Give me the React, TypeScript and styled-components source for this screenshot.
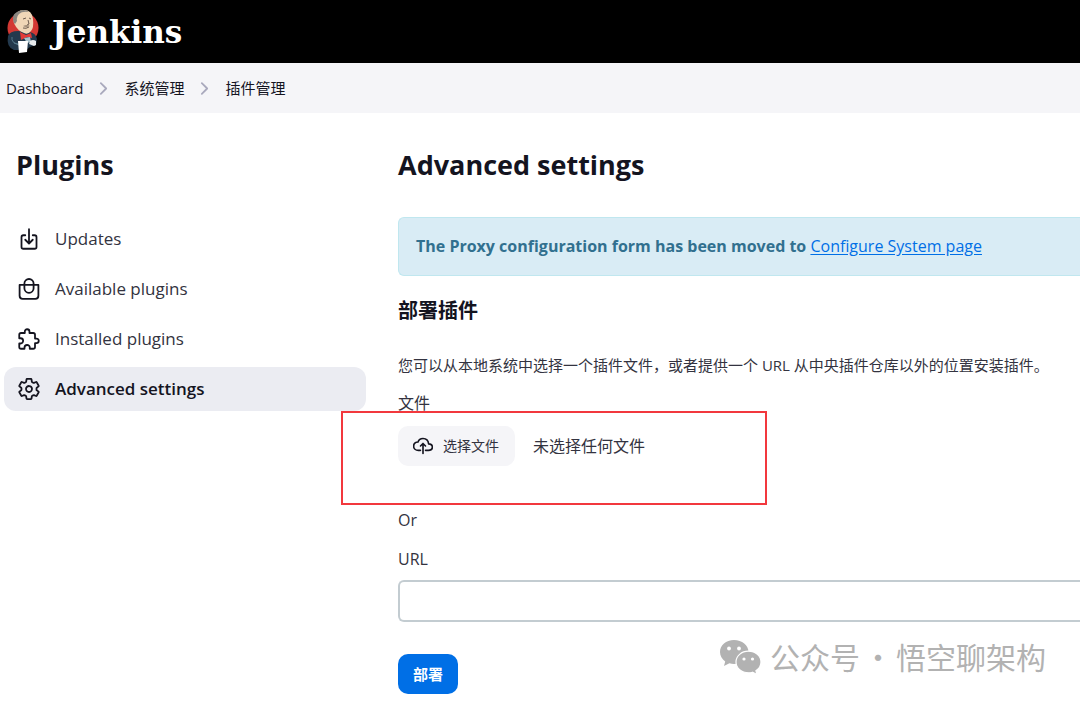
import React, { useRef, useState } from "react";
import styled, { createGlobalStyle, css } from "styled-components";
import {
  IoChevronForward,
  IoCloudUploadOutline,
  IoDownloadOutline,
  IoExtensionPuzzleOutline,
  IoSettingsOutline,
} from "react-icons/io5";

const colors = {
  text: "#14141f",
  muted: "#333340",
  bar: "#f5f5f8",
  active: "#ebecf2",
  primary: "#006fe6",
  infoBg: "#d9ecf5",
  infoBorder: "#c0e7ef",
  infoText: "#31708f",
  inputBorder: "#c3ccd1",
  mark: "#f2383d",
  watermark: "#b2b2b2",
};

const GlobalStyle = createGlobalStyle`
  *, *::before, *::after { box-sizing: border-box; }
  body {
    margin: 0;
    background: #fff;
    color: ${colors.text};
    font: 400 16px/24px "Open Sans", "Noto Sans CJK SC", sans-serif;
    overflow-x: hidden;
  }
`;

const Page = styled.div`
  position: relative;
`;

const Header = styled.header`
  display: flex;
  align-items: center;
  height: 63px;
  padding: 0 6px;
  background: #000;
`;

const Brand = styled.a`
  display: flex;
  align-items: center;
  gap: 13px;
  color: #fff;
  font: 700 31px/40px "DejaVu Serif", serif;
  text-decoration: none;
`;

const Breadcrumbs = styled.nav`
  display: flex;
  align-items: center;
  gap: 11px;
  height: 50px;
  padding: 0 6px;
  background: ${colors.bar};
  font-size: 15px;
`;

const Crumb = styled.a`
  color: ${colors.text};
  text-decoration: none;
`;

const Separator = styled(IoChevronForward)`
  width: 19px;
  height: 19px;
  color: #a9a9bd;
`;

const Body = styled.div`
  display: grid;
  grid-template-columns: 362px minmax(0, 1fr);
  gap: 32px;
  padding: 32px 0 8px 4px;
`;

const Title = styled.h1<{ $inset?: boolean }>`
  margin: 0;
  padding-left: ${(p) => (p.$inset ? 12 : 0)}px;
  font-size: 27px;
  font-weight: 700;
  line-height: 40px;
`;

const TaskList = styled.ul`
  display: flex;
  flex-direction: column;
  gap: 6px;
  margin: 32px 0 0;
  padding: 0;
  list-style: none;
`;

const Task = styled.a<{ $active?: boolean }>`
  display: flex;
  align-items: center;
  gap: 14px;
  height: 44px;
  padding: 0 13px;
  border-radius: 12px;
  color: ${colors.muted};
  font-size: 17px;
  text-decoration: none;

  svg {
    width: 24px;
    height: 24px;
    color: ${colors.text};
  }

  svg[viewBox="0 0 512 512"] path {
    stroke-width: 38px;
  }

  ${(p) =>
    p.$active &&
    css`
      background: ${colors.active};
      color: ${colors.text};
      font-weight: 600;
    `}
`;

const Alert = styled.div`
  margin-top: 32px;
  padding: 16px 17px 17px;
  border: 1px solid ${colors.infoBorder};
  border-right: 0;
  border-radius: 6px 0 0 6px;
  background: ${colors.infoBg};
  color: ${colors.infoText};
  font-weight: 700;
  white-space: nowrap;

  a {
    color: ${colors.primary};
    font-weight: 400;
    text-underline-offset: 2px;
  }
`;

const SectionTitle = styled.h2`
  margin: 21px 0 0;
  font-size: 20px;
  font-weight: 700;
  line-height: 28px;
`;

const Description = styled.p`
  margin: 28px 0 0;
  color: ${colors.muted};
  font-size: 15px;
`;

const FileField = styled.div`
  position: relative;
  margin-top: 14px;
`;

const Label = styled.label`
  display: block;
  color: ${colors.muted};
`;

const FileRow = styled.div`
  display: flex;
  align-items: center;
  gap: 18px;
  margin-top: 11px;
  color: ${colors.muted};

  input {
    display: none;
  }
`;

const FileButton = styled.button`
  display: flex;
  align-items: center;
  gap: 10px;
  height: 40px;
  padding: 0 16px 0 15px;
  border: 0;
  border-radius: 10px;
  background: ${colors.bar};
  color: ${colors.muted};
  font: inherit;
  font-size: 14px;

  svg {
    width: 20px;
    height: 20px;
    color: ${colors.text};
  }

  svg path {
    stroke-width: 42px;
  }
`;

const Highlight = styled.div`
  position: absolute;
  top: 20px;
  left: -57px;
  width: 426px;
  height: 94px;
  border: 2px solid ${colors.mark};
  pointer-events: none;
`;

const Or = styled.p`
  margin: 42px 0 15px;
  color: ${colors.muted};
`;

const UrlInput = styled.input`
  display: block;
  width: 100%;
  height: 42px;
  margin-top: 9px;
  padding: 0 12px;
  border: 2px solid ${colors.inputBorder};
  border-right: 0;
  border-radius: 6px 0 0 6px;
  background: #fff;
  font: inherit;
`;

const SubmitButton = styled.button`
  height: 40px;
  margin-top: 32px;
  padding: 0 15px;
  border: 0;
  border-radius: 10px;
  background: ${colors.primary};
  color: #fff;
  font: inherit;
  font-size: 15px;
  font-weight: 700;
`;

const Watermark = styled.div`
  position: absolute;
  right: 34px;
  bottom: 26px;
  display: flex;
  align-items: center;
  gap: 3px;
  color: ${colors.watermark};
  font: 400 30px/40px "Noto Sans CJK SC", sans-serif;
  white-space: nowrap;

  svg {
    margin: 2px 5px 0 0;
  }
`;

const Butler = () => (
  <svg width="33" height="46" viewBox="0 0 33 46" aria-hidden="true">
    <circle cx="17" cy="19" r="15.5" fill="#d33833" />
    <path d="M2 27Q4 22 12 22l11 1q7 1 8 7l-1 6-6 2-4 3H8Q0 38 2 27Z" fill="#23394d" />
    <path d="M8 9Q10 1 18 1q8 0 9 9 1 9-2 12-3 4-7 2-7-3-9-8Q7 14 8 9Z" fill="#f0d6b7" />
    <path d="M8 14Q5 6 11 3q7-4 12 0-7-1-10 2-3 3-2 7l-2 3Z" fill="#8a8680" />
    <path d="M17 10l3-1M23 9l2 1M22 11l1 4-2 1M17 19q3 1 6-1" stroke="#4d3c35" strokeWidth=".8" fill="none" />
    <path d="M17 17q4-2 7 0-4 2-7 0Z" fill="#a08c78" />
    <path d="M14 23l6 3 5-2 1 5-5-1-6 3Z" fill="#e23a38" />
    <path d="M18 29l6-1 1 5-4 1Z" fill="#a9c2cc" />
    <path d="M6 28q-1 6 6 7M8 34l5 2" stroke="#54788b" strokeWidth="1" fill="none" />
    <path d="M12 32l10 0-1 11-8 1Z" fill="#fff" />
    <path d="M24 32q3-2 6 0l0 4-2 1-5-2Z" fill="#e6e9eb" />
  </svg>
);

const BagIcon = () => (
  <svg viewBox="0 0 24 24" fill="none" stroke="currentColor" strokeWidth="1.8" aria-hidden="true">
    <path d="M2.6 7.9H21.4V18.8Q21.4 21.8 18.4 21.8H5.6Q2.6 21.8 2.6 18.8Z" strokeLinejoin="round" />
    <rect x="7.4" y="2" width="9.2" height="13.8" rx="4.6" />
  </svg>
);

const WeChatIcon = () => (
  <svg width="43" height="36" viewBox="0 0 43 36" aria-hidden="true">
    <path d="M15 1C7 1 1 6.400 1 13c0 4 2 7.200 5.200 9.400L5 27l5.400-2.800q2.200.7 4.600.7c8 0 14.500-5.300 14.500-12S23 1 15 1Z" fill="currentColor" />
    <path d="M29.500 12.200C22.500 12.200 17 17 17 23s5.500 10.800 12.500 10.800q2 0 4-.6l4.500 2.300-1.100-3.700C40 29.800 42 26.700 42 23c0-6-5.500-10.800-12.500-10.800Z" fill="currentColor" stroke="#fff" strokeWidth="1.2" />
    <g fill="#fff">
      <circle cx="10" cy="9.500" r="1.900" />
      <circle cx="20" cy="9.500" r="1.900" />
      <circle cx="25" cy="20" r="1.600" />
      <circle cx="33.500" cy="20" r="1.600" />
    </g>
  </svg>
);

const tasks = [
  { label: "Updates", icon: <IoDownloadOutline /> },
  { label: "Available plugins", icon: <BagIcon /> },
  { label: "Installed plugins", icon: <IoExtensionPuzzleOutline /> },
  { label: "Advanced settings", icon: <IoSettingsOutline />, active: true },
];

export default function App() {
  const picker = useRef<HTMLInputElement>(null);
  const [fileName, setFileName] = useState("未选择任何文件");

  return (
    <Page>
      <GlobalStyle />
      <Header>
        <Brand href="#">
          <Butler />
          Jenkins
        </Brand>
      </Header>
      <Breadcrumbs aria-label="Breadcrumb">
        <Crumb href="#">Dashboard</Crumb>
        <Separator />
        <Crumb href="#">系统管理</Crumb>
        <Separator />
        <Crumb href="#">插件管理</Crumb>
      </Breadcrumbs>
      <Body>
        <aside>
          <Title as="h2" $inset>Plugins</Title>
          <TaskList>
            {tasks.map((t) => (
              <li key={t.label}>
                <Task href="#" $active={t.active}>
                  {t.icon}
                  {t.label}
                </Task>
              </li>
            ))}
          </TaskList>
        </aside>
        <main>
          <Title>Advanced settings</Title>
          <Alert>
            The Proxy configuration form has been moved to <a href="#">Configure System page</a>
          </Alert>
          <SectionTitle>部署插件</SectionTitle>
          <Description>
            您可以从本地系统中选择一个插件文件，或者提供一个 URL 从中央插件仓库以外的位置安装插件。
          </Description>
          <FileField>
            <Label htmlFor="plugin-file">文件</Label>
            <FileRow>
              <FileButton type="button" onClick={() => picker.current?.click()}>
                <IoCloudUploadOutline />
                选择文件
              </FileButton>
              <span>{fileName}</span>
              <input
                id="plugin-file"
                ref={picker}
                type="file"
                onChange={(e) => setFileName(e.target.files?.[0]?.name ?? "未选择任何文件")}
              />
            </FileRow>
            <Highlight />
          </FileField>
          <Or>Or</Or>
          <Label htmlFor="plugin-url">URL</Label>
          <UrlInput id="plugin-url" type="text" />
          <SubmitButton type="submit">部署</SubmitButton>
        </main>
      </Body>
      <Watermark>
        <WeChatIcon />
        <span>公众号</span>
        <span>·</span>
        <span>悟空聊架构</span>
      </Watermark>
    </Page>
  );
}
